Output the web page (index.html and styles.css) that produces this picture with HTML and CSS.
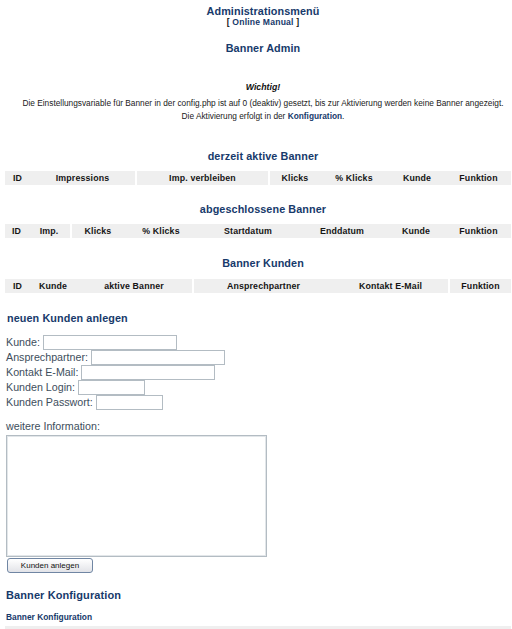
FILE: index.html
```html
<!DOCTYPE html>
<html lang="de">
<head>
<meta charset="utf-8">
<title>Banner Admin</title>
<link rel="stylesheet" href="styles.css">
</head>
<body>
<div class="page">
  <header class="admin-head">
    <div class="admin-title">Administrationsmenü</div>
    <div class="manual">[ <a href="#">Online Manual</a> ]</div>
  </header>

  <h2 class="sec-title banner-admin">Banner Admin</h2>

  <div class="notice">
    <div class="wichtig">Wichtig!</div>
    <p class="notice-text">Die Einstellungsvariable für Banner in der config.php ist auf 0 (deaktiv) gesetzt, bis zur Aktivierung werden keine Banner angezeigt.<br>Die Aktivierung erfolgt in der <a href="#">Konfiguration</a>.</p>
  </div>

  <h3 class="sec-title t-aktiv">derzeit aktive Banner</h3>
  <div class="bar t1">
    <span>ID</span><span>Impressions</span><span class="sep">Imp. verbleiben</span><span class="sep">Klicks</span><span>% Klicks</span><span>Kunde</span><span>Funktion</span>
  </div>

  <h3 class="sec-title t-abg">abgeschlossene Banner</h3>
  <div class="bar t2">
    <span>ID</span><span>Imp.</span><span class="sep">Klicks</span><span>% Klicks</span><span>Startdatum</span><span>Enddatum</span><span>Kunde</span><span>Funktion</span>
  </div>

  <h3 class="sec-title t-kunden">Banner Kunden</h3>
  <div class="bar t3">
    <span>ID</span><span>Kunde</span><span>aktive Banner</span><span class="sep">Ansprechpartner</span><span>Kontakt E-Mail</span><span class="sep">Funktion</span>
  </div>

  <h4 class="left-title">neuen Kunden anlegen</h4>
  <form class="kunden-form">
    <label class="row">Kunde: <input class="inp wide" type="text"></label>
    <label class="row">Ansprechpartner: <input class="inp wide" type="text"></label>
    <label class="row">Kontakt E-Mail: <input class="inp wide" type="text"></label>
    <label class="row">Kunden Login: <input class="inp short" type="text"></label>
    <label class="row">Kunden Passwort: <input class="inp short" type="password"></label>
    <div class="info-label">weitere Information:</div>
    <textarea class="info"></textarea>
    <button class="btn" type="button">Kunden anlegen</button>
  </form>

  <h4 class="left-title big">Banner Konfiguration</h4>
  <div class="small-title">Banner Konfiguration</div>
  <div class="bar bottom-bar"></div>
</div>
</body>
</html>
```

FILE: styles.css
```css
html, body {
  margin: 0;
  padding: 0;
  background: #ffffff;
}

body {
  font-family: "Liberation Sans", Arial, sans-serif;
  color: #1a1a1a;
  width: 512px;
  height: 629px;
  overflow: hidden;
}

a {
  color: #173a6b;
  text-decoration: none;
  font-weight: bold;
}

.page {
  padding-top: 5px;
}

.admin-head {
  padding-left: 14px;
  text-align: center;
}

.admin-title {
  font-weight: bold;
  font-size: 10.8px;
  line-height: 12px;
  color: #173a6b;
  letter-spacing: 0.1px;
}

.manual {
  font-weight: bold;
  font-size: 8.6px;
  line-height: 10px;
  color: #111;
  letter-spacing: 0.2px;
}

.sec-title {
  margin: 0;
  padding-left: 14px;
  text-align: center;
  font-weight: bold;
  font-size: 10.8px;
  line-height: 12px;
  color: #173a6b;
  letter-spacing: 0.1px;
}

.banner-admin { margin-top: 15px; }

.notice {
  padding-left: 14px;
  text-align: center;
}

.wichtig {
  margin-top: 28px;
  font-weight: bold;
  font-style: italic;
  font-size: 8.8px;
  line-height: 10px;
  color: #111;
}

.notice-text {
  margin: 5px 0 0;
  font-size: 8.3px;
  line-height: 13px;
  color: #1a1a1a;
}

.t-aktiv { margin-top: 27px; }
.t-abg { margin-top: 18px; }
.t-kunden { margin-top: 19px; }

.bar {
  display: grid;
  margin: 9px 1px 0 5px;
  height: 14px;
  background: #efefef;
  font-weight: bold;
  font-size: 8.8px;
  line-height: 14px;
  color: #151515;
  letter-spacing: 0.15px;
}

.bar span {
  text-align: center;
  white-space: nowrap;
}

.bar .sep {
  border-left: 2px solid #ffffff;
}

.t1 { grid-template-columns: 25px 105px 133px 52px 68px 58px 65px; }
.t2 { grid-template-columns: 23px 42px 54px 74px 100px 88px 60px 65px; }
.t3 { grid-template-columns: 25px 46px 116px 141px 115px 63px; margin-top: 10px; }

.left-title {
  margin: 19px 0 0 7px;
  font-weight: bold;
  font-size: 10.8px;
  line-height: 12px;
  color: #173a6b;
  letter-spacing: 0.1px;
}

.kunden-form {
  margin: 11px 0 0 6px;
  font-size: 10.7px;
  color: #404e5c;
}

.row {
  display: block;
  height: 15px;
  line-height: 15px;
}

.inp {
  box-sizing: border-box;
  height: 15px;
  margin: 0;
  padding: 0;
  border: 1px solid #b3bcc3;
  background: #fff;
  vertical-align: top;
}

.inp.wide { width: 134px; }
.inp.short { width: 67px; }

.info-label {
  margin-top: 10px;
  line-height: 13px;
}

.info {
  display: block;
  box-sizing: border-box;
  margin: 2px 0 0;
  width: 261px;
  height: 122px;
  border: 1px solid #b3bcc3;
  box-shadow: inset 0 0 0 1px #e2e6e9;
  resize: none;
}

.btn {
  display: block;
  box-sizing: border-box;
  margin: 1px 0 0 1px;
  width: 86px;
  height: 15px;
  padding: 0;
  border: 1px solid #7086a3;
  border-radius: 3px;
  background: linear-gradient(#ffffff, #e2e3e8);
  font-family: "Liberation Sans", Arial, sans-serif;
  font-size: 8px;
  color: #111;
}

.left-title.big {
  margin: 16px 0 0 6px;
  font-size: 11px;
  line-height: 13px;
}

.small-title {
  margin: 10px 0 0 6px;
  font-weight: bold;
  font-size: 8.4px;
  line-height: 10px;
  color: #173a6b;
}

.bottom-bar {
  margin-top: 4px;
}
```
